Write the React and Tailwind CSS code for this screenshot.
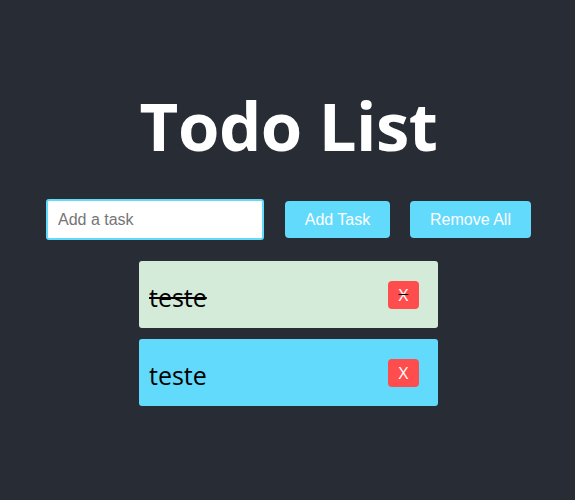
import React, { useState } from 'react'

const App = () => {
  const [todos, setTodos] = useState([
    { id: 1, text: 'teste', done: true },
    { id: 2, text: 'teste', done: false },
  ])
  const [input, setInput] = useState('')

  const addTodo = () => {
    if (!input.trim()) return
    setTodos([...todos, { id: Date.now(), text: input, done: false }])
    setInput('')
  }

  return (
    <div className="min-h-[500px] bg-[#282c34] pl-[2px] flex flex-col items-center font-['Open_Sans',sans-serif]">
      <h1 className="mt-[77px] text-[67px] leading-[96px] font-bold text-white tracking-[-0.5px]">Todo List</h1>
      <div className="mt-[26px] flex items-center">
        <input
          value={input}
          onChange={(e) => setInput(e.target.value)}
          placeholder="Add a task"
          className="w-[218px] h-[41px] border-2 border-[#61dafb] rounded-[3px] bg-white px-[10px] text-[16px] text-black placeholder:text-[#757575] font-['Liberation_Sans',sans-serif] outline-none"
        />
        <button
          onClick={addTodo}
          className="ml-[21px] w-[105px] h-[37px] bg-[#61dafb] rounded-[4px] text-white text-[16px] font-['Liberation_Sans',sans-serif]"
        >
          Add Task
        </button>
        <button
          onClick={() => setTodos([])}
          className="ml-[20px] w-[121px] h-[37px] bg-[#61dafb] rounded-[4px] text-white text-[16px] font-['Liberation_Sans',sans-serif]"
        >
          Remove All
        </button>
      </div>
      <ul className="mt-[21px] flex flex-col gap-[11px]">
        {todos.map((t) => (
          <li
            key={t.id}
            onClick={() => setTodos(todos.map((x) => (x.id === t.id ? { ...x, done: !x.done } : x)))}
            className={`w-[299px] h-[67px] rounded-[3px] flex items-center justify-between pl-[10px] pr-[19px] text-[25px] text-black ${t.done ? 'bg-[#d4ebda] line-through' : 'bg-[#61dafb]'}`}
          >
            <span className="mt-[6px]">{t.text}</span>
            <button
              onClick={(e) => {
                e.stopPropagation()
                setTodos(todos.filter((x) => x.id !== t.id))
              }}
              className="w-[31px] h-[28px] bg-[#ff4d4d] rounded-[4px] text-white text-[17px] leading-none"
            >
              X
            </button>
          </li>
        ))}
      </ul>
    </div>
  )
}

export default App
